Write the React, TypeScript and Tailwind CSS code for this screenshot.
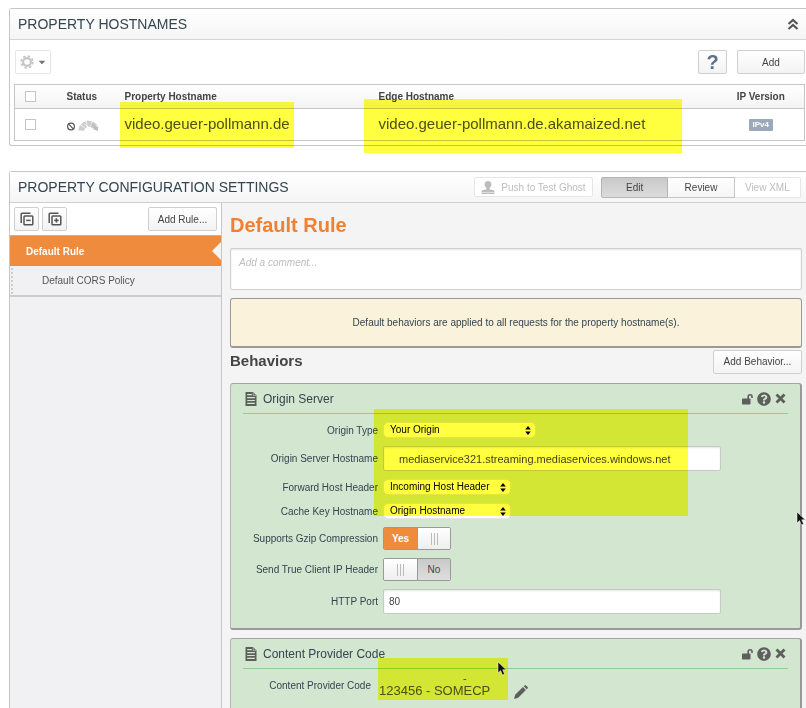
import { FaQuestionCircle, FaCaretDown } from "react-icons/fa";
import type { ReactNode } from "react";

const smallButton =
  "flex items-center justify-center rounded-[2px] border border-[#cfcfcf] bg-linear-to-b from-white to-[#f3f3f3] text-[10px] text-[#444]";

function Highlight({ className }: { className: string }) {
  return (
    <div aria-hidden="true" className={`pointer-events-none absolute bg-[#ffff40] mix-blend-multiply ${className}`} />
  );
}

function Pointer({ className }: { className: string }) {
  return (
    <svg aria-hidden="true" viewBox="0 0 10 15" className={`pointer-events-none absolute h-[15px] w-[10px] ${className}`}>
      <path d="M1 1v11l2.6-2.4L5.4 14l2.2-.9-1.9-4.300H9.200z" fill="#111" stroke="#fff" strokeWidth=".5" />
    </svg>
  );
}

function GearIcon() {
  return (
    <svg aria-hidden="true" viewBox="0 0 14 14" className="h-[14px] w-[14px]" fill="none" stroke="#c6c6c6">
      <circle cx="7" cy="7" r="5.8" strokeWidth="1.8" strokeDasharray="2.4 2.155" />
      <circle cx="7" cy="7" r="3.9" strokeWidth="2.2" />
    </svg>
  );
}

function PageIcon() {
  return (
    <svg aria-hidden="true" viewBox="0 0 12 14" className="h-[14px] w-[12px]">
      <path d="M.5 0H8l3.500 3.500V14H.5z" fill="#5c5f5c" />
      <path d="M2.200 2.700h4.600M2.200 5.700h7.600M2.200 8.500h7.600M2.200 11.300h7.600" stroke="#d3e6d0" strokeWidth="1.2" />
      <path d="M8.200.600v2.800H11" stroke="#d3e6d0" strokeWidth=".6" fill="none" />
    </svg>
  );
}

function UnlockIcon() {
  return (
    <svg aria-hidden="true" viewBox="0 0 11 12" className="h-[12px] w-[11px]">
      <rect x="0" y="5.500" width="8.500" height="6" rx=".8" fill="#5c5f5c" />
      <path d="M6.200 6V3.600a1.900 1.900 0 0 1 3.800 0V5" fill="none" stroke="#5c5f5c" strokeWidth="1.600" />
    </svg>
  );
}

function CloseIcon() {
  return (
    <svg aria-hidden="true" viewBox="0 0 11 11" className="h-[11px] w-[11px]">
      <path d="M1.500 1.500l8 8M9.500 1.500l-8 8" stroke="#5c5f5c" strokeWidth="2.800" />
    </svg>
  );
}

function PencilIcon() {
  return (
    <svg aria-hidden="true" viewBox="0 0 14 14" className="h-[14px] w-[14px]" fill="#5c5f5c">
      <path d="M0 14l1.200-4.200L8.900 2.100l3 3-7.700 7.700zM9.700 1.300l.9-.9q.7-.6 1.400 0l1.600 1.600q.6.700 0 1.400l-.9.9z" />
    </svg>
  );
}

function StackIcon({ plus }: { plus?: boolean }) {
  return (
    <svg aria-hidden="true" viewBox="0 0 14 14" className="h-[14px] w-[14px]" fill="none" stroke="#555" strokeWidth="1.500">
      <path d="M1.200 11V2q0-.8.8-.8h8.500" />
      <rect x="4" y="4" width="8.800" height="8.800" rx=".8" />
      <path d="M6.200 8.400h4.400" />
      {plus && <path d="M8.400 6.200v4.400" />}
    </svg>
  );
}

function BehaviorHeader({ title }: { title: string }) {
  return (
    <header className="ml-3 mr-3 flex h-[30px] items-center border-b border-[#93cb93] pl-0.5">
      <PageIcon />
      <h3 className="ml-1.5 flex-1 text-[12px] text-[#33454f]">{title}</h3>
      <div className="flex items-center gap-1 pr-0.5">
        <button type="button" aria-label="Unlock">
          <UnlockIcon />
        </button>
        <button type="button" aria-label="Help">
          <FaQuestionCircle className="h-[14px] w-[14px] text-[#5c5f5c]" />
        </button>
        <button type="button" aria-label="Remove">
          <CloseIcon />
        </button>
      </div>
    </header>
  );
}

function Row({ id, label, children, height }: { id: string; label: string; children: ReactNode; height: string }) {
  return (
    <div className={`grid grid-cols-[147px_1fr] items-center gap-x-[5px] ${height}`}>
      <label htmlFor={id} className="text-right text-[10px] text-[#33454f]">
        {label}
      </label>
      <div className="flex">{children}</div>
    </div>
  );
}

function Dropdown({ id, value, width }: { id: string; value: string; width: string }) {
  return (
    <div className={`relative ${width}`}>
      <select
        id={id}
        defaultValue={value}
        className="block h-4 w-full appearance-none rounded-[5px] border border-[#e4e4e4] bg-white pl-1.5 text-[10px] leading-[14px] text-black"
      >
        <option>{value}</option>
      </select>
      <svg aria-hidden="true" viewBox="0 0 6 9" className="pointer-events-none absolute right-[5px] top-1 h-[9px] w-[6px]">
        <path d="M3 0l2.800 3.600H.200zM3 9L.200 5.400h5.600z" fill="#000" />
      </svg>
    </div>
  );
}

function Grip() {
  return (
    <span className="flex h-3 w-[7px] justify-between">
      <span className="w-px bg-[#bbb]" />
      <span className="w-px bg-[#bbb]" />
      <span className="w-px bg-[#bbb]" />
    </span>
  );
}

function Toggle({ id, on }: { id: string; on: boolean }) {
  const half = "flex w-1/2 items-center justify-center";
  return (
    <label htmlFor={id} className="relative flex h-[23px] w-[68px] overflow-hidden rounded-[2px] border border-[#999] text-[10px]">
      <input id={id} type="checkbox" defaultChecked={on} className="sr-only" />
      {on ? (
        <>
          <span className={`${half} bg-[#ef8b3c] font-bold text-white`}>Yes</span>
          <span className={`${half} border-l border-[#999] bg-linear-to-b from-white to-[#eee]`}><Grip /></span>
        </>
      ) : (
        <>
          <span className={`${half} bg-linear-to-b from-white to-[#eee]`}><Grip /></span>
          <span className={`${half} border-l border-[#999] bg-linear-to-b from-[#c9c9c9] to-[#dedede] text-[#444]`}>No</span>
        </>
      )}
    </label>
  );
}

const textField =
  "h-[25px] w-[338px] rounded-[2px] border border-[#c8c8c8] bg-white text-[#444] shadow-[inset_0_1px_2px_#0000001a]";

const checkbox = "block h-[11px] w-[11px] appearance-none border border-[#c4c4c4] bg-white";

function HostnamesPanel() {
  return (
    <section className="rounded-l-[3px] border border-r-0 border-[#c6c6c6] bg-white">
      <header className="flex h-[31px] items-center justify-between border-b border-[#d4d4d4] bg-linear-to-b from-white to-[#f5f5f5] pl-2 pr-[7px]">
        <h2 className="text-[14px] text-[#33454f]">PROPERTY HOSTNAMES</h2>
        <button type="button" aria-label="Collapse">
          <svg aria-hidden="true" viewBox="0 0 12 12" className="h-3 w-3" fill="none" stroke="#555" strokeWidth="2.100">
            <path d="M1.500 6L6 2l4.500 4M1.500 11L6 7l4.500 4" />
          </svg>
        </button>
      </header>
      <div className="flex h-11 items-center pl-[5px] pr-px">
        <button type="button" aria-label="Actions" className="flex h-6 w-9 items-center justify-center gap-1 rounded-[2px] border border-[#e6e6e6]">
          <GearIcon />
          <FaCaretDown className="h-2.5 w-2 text-[#777]" />
        </button>
        <button type="button" className={`${smallButton} ml-auto h-6 w-[29px]`}>
          <span className="text-[20px] font-bold leading-none text-[#5f7186]">?</span>
        </button>
        <button type="button" className={`${smallButton} ml-2.5 h-6 w-[68px]`}>Add</button>
      </div>
      <div className="relative mb-1 ml-1 mr-px">
        <table className="w-full table-fixed border border-[#c6c6c6] text-left">
          <thead>
            <tr className="h-6 border-b border-[#c6c6c6] bg-linear-to-b from-white to-[#f3f3f3] text-[10px] text-[#444]">
              <th className="w-[52px] pl-2.5">
                <input type="checkbox" aria-label="Select all" className={checkbox} />
              </th>
              <th className="w-[58px]">Status</th>
              <th className="w-[254px]">Property Hostname</th>
              <th>Edge Hostname</th>
              <th className="w-[87px] text-center">IP Version</th>
            </tr>
          </thead>
          <tbody>
            <tr className="h-8">
              <td className="pl-2.5">
                <input type="checkbox" aria-label="Select video.geuer-pollmann.de" className={checkbox} />
              </td>
              <td>
                <svg aria-label="Inactive" viewBox="0 0 32 14" className="h-[14px] w-8">
                  <circle cx="4" cy="8.500" r="3.400" fill="none" stroke="#555" strokeWidth="1.200" />
                  <path d="M1.700 6.200l4.600 4.600" stroke="#555" strokeWidth="1.200" />
                  <path d="M14.200 12.500a7.600 7.600 0 0 1 14.600-2" fill="none" stroke="#cdcdcd" strokeWidth="6" strokeDasharray="4 .6" />
                  <path d="M16 4.500l12 9.500h-3z" fill="#fff" />
                  <path d="M24 4.500l7 5.500v3l-4-1.500z" fill="#bdbdbd" />
                </svg>
              </td>
              <td className="text-[15px] text-[#4c5054]">video.geuer-pollmann.de</td>
              <td className="text-[15px] text-[#4c5054]">video.geuer-pollmann.de.akamaized.net</td>
              <td>
                <span className="mx-auto block h-3 w-6 rounded-[1px] bg-[#9ca9b9] text-center text-[8px] font-bold leading-3 text-white">IPv4</span>
              </td>
            </tr>
          </tbody>
        </table>
        <Highlight className="left-[106px] top-[18px] h-[46px] w-[174px]" />
        <Highlight className="left-[350px] top-[15px] h-[54px] w-[318px]" />
      </div>
    </section>
  );
}

function Sidebar() {
  return (
    <nav aria-label="Rules" className="w-[212px] shrink-0 border-r border-[#c6c6c6] bg-[#f1f1f3]">
      <div className="flex h-8 items-center gap-[3px] bg-white pl-1 pr-1">
        <button type="button" aria-label="Collapse all" className={`${smallButton} h-6 w-[25px]`}>
          <StackIcon />
        </button>
        <button type="button" aria-label="Expand all" className={`${smallButton} h-6 w-[25px]`}>
          <StackIcon plus />
        </button>
        <button type="button" className={`${smallButton} ml-auto h-6 w-[69px]`}>Add Rule...</button>
      </div>
      <a href="#default-rule" className="flex h-[31px] items-center justify-between border-t border-[#b5b5b5] bg-[#ef8b3c] pl-4 text-[10px] font-bold text-white">
        Default Rule
        <svg aria-hidden="true" viewBox="0 0 9 18" className="h-[18px] w-[9px]">
          <path d="M9 0v18L0 9z" fill="#f4f4f4" />
        </svg>
      </a>
      <a href="#default-cors-policy" className="flex h-[31px] items-center border-b-2 border-[#cdcdcd] pl-px text-[10px] text-[#555]">
        <span className="h-[26px] border-l-2 border-dotted border-[#ccc]" />
        <span className="ml-[29px]">Default CORS Policy</span>
      </a>
    </nav>
  );
}

function ConfigurationPanel() {
  return (
    <section className="mt-[25px] flex flex-1 flex-col rounded-tl-[3px] border border-b-0 border-r-0 border-[#c6c6c6]">
      <header className="flex h-[31px] items-center border-b border-[#cfcfcf] bg-linear-to-b from-white to-[#f5f5f5] pl-2 pr-[5px]">
        <h2 className="flex-1 text-[14px] text-[#33454f]">PROPERTY CONFIGURATION SETTINGS</h2>
        <button type="button" disabled className="flex h-5 w-[119px] items-center justify-center gap-1.5 rounded-[2px] border border-[#e6e6e6] bg-white text-[10px] text-[#bdbdbd]">
          <svg aria-hidden="true" viewBox="0 0 14 13" className="h-[13px] w-[14px]" fill="#bdbdbd">
            <ellipse cx="7" cy="3.600" rx="3.400" ry="3.600" />
            <path d="M5.400 6h3.200v2.200l4.900 1.200v1.800H.5V9.400l4.900-1.200zM.5 11.800h13V13H.5z" />
          </svg>
          Push to Test Ghost
        </button>
        <div className="ml-2 flex h-[21px] w-[200px] text-[10px] text-[#444]">
          <button type="button" className="flex-1 rounded-l-[2px] border border-[#b5b5b5] bg-linear-to-b from-[#c9c9c9] to-[#dcdcdc]">Edit</button>
          <button type="button" className="flex-1 border-y border-r border-[#c6c6c6] bg-linear-to-b from-white to-[#f5f5f5]">Review</button>
          <button type="button" disabled className="flex-1 rounded-r-[2px] border-y border-r border-[#e6e6e6] bg-white text-[#bdbdbd]">View XML</button>
        </div>
      </header>
      <div className="flex flex-1">
        <Sidebar />
        <main className="flex min-w-0 flex-1 flex-col bg-[#f4f4f4] pl-2 pr-1">
          <h1 className="flex h-[45px] items-center pb-0.5 text-[20px] font-bold text-[#ef8232]">Default Rule</h1>
          <textarea
            aria-label="Comment"
            placeholder="Add a comment..."
            className="block h-[42px] w-full resize-none rounded-[2px] border border-[#cfcfcf] bg-white px-2 py-1.5 text-[10px] italic shadow-[inset_0_1px_2px_#0000001a] placeholder:text-[#bdbdbd]"
          />
          <p className="mt-2 flex h-[50px] items-center justify-center rounded-[3px] border border-b-2 border-[#999] bg-[#faf2da] text-[10px] text-[#33454f]">
            Default behaviors are applied to all requests for the property hostname(s).
          </p>
          <div className="flex h-[27px] items-center justify-between">
            <h2 className="text-[15px] font-bold text-[#444]">Behaviors</h2>
            <button type="button" className={`${smallButton} h-6 w-[89px]`}>Add Behavior...</button>
          </div>
          <section className="relative mt-2 rounded-[3px] border border-b-2 border-r-2 border-[#999] border-l-[#b5b5b5] border-t-[#a5a5a5] bg-[#d3e6d0] pb-3.5">
            <BehaviorHeader title="Origin Server" />
            <div className="mt-2 flex flex-col gap-2">
              <Row id="origin-type" label="Origin Type" height="h-4">
                <Dropdown id="origin-type" value="Your Origin" width="w-[153px]" />
              </Row>
              <Row id="origin-host" label="Origin Server Hostname" height="h-[25px]">
                <input id="origin-host" type="text" defaultValue="mediaservice321.streaming.mediaservices.windows.net" className={`${textField} pl-[15px] text-[11px]`} />
              </Row>
              <Row id="forward-host" label="Forward Host Header" height="h-4">
                <Dropdown id="forward-host" value="Incoming Host Header" width="w-32" />
              </Row>
              <Row id="cache-key" label="Cache Key Hostname" height="h-4">
                <Dropdown id="cache-key" value="Origin Hostname" width="w-32" />
              </Row>
              <Row id="gzip" label="Supports Gzip Compression" height="h-[23px]">
                <Toggle id="gzip" on />
              </Row>
              <Row id="client-ip" label="Send True Client IP Header" height="h-[23px]">
                <Toggle id="client-ip" on={false} />
              </Row>
              <Row id="http-port" label="HTTP Port" height="h-[25px]">
                <input id="http-port" type="text" defaultValue="80" className={`${textField} pl-[5px] text-[10px]`} />
              </Row>
            </div>
            <Highlight className="left-[143px] top-[25px] h-[107px] w-[314px]" />
            <Pointer className="right-[-6px] top-[127px]" />
          </section>
          <section className="relative mt-2 flex-1 rounded-t-[3px] border border-b-0 border-r-2 border-[#999] border-l-[#b5b5b5] border-t-[#a5a5a5] bg-[#d3e6d0]">
            <BehaviorHeader title="Content Provider Code" />
            <div className="flex items-start">
              <span className="mt-[9px] w-[140px] text-right text-[10px] text-[#33454f]">Content Provider Code</span>
              <div className="ml-2 text-[#4c5054]">
                <span className="block h-3.5 pl-[84px] text-[11px] leading-[18px]">-</span>
                <span className="block text-[13px] leading-4">123456 - SOMECP</span>
              </div>
              <button type="button" aria-label="Edit code" className="ml-6 mt-4">
                <PencilIcon />
              </button>
            </div>
            <Highlight className="left-[147px] top-[19px] h-[42px] w-[130px]" />
            <Pointer className="left-[266px] top-[22px]" />
          </section>
        </main>
      </div>
    </section>
  );
}

export default function App() {
  return (
    <div className="flex min-h-screen flex-col overflow-hidden bg-white pl-[9px] pt-2 font-['Liberation_Sans',Arial,sans-serif]">
      <HostnamesPanel />
      <ConfigurationPanel />
    </div>
  );
}
